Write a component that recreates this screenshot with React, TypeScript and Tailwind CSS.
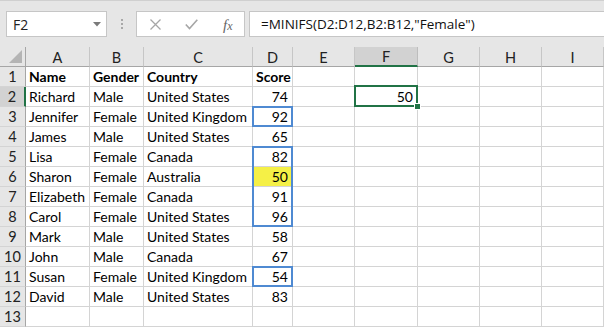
import React from "react";

const cols = ["A", "B", "C", "D", "E", "F", "G", "H", "I"];

type Row = [string, string, string, string];
const data: Row[] = [
  ["Name", "Gender", "Country", "Score"],
  ["Richard", "Male", "United States", "74"],
  ["Jennifer", "Female", "United Kingdom", "92"],
  ["James", "Male", "United States", "65"],
  ["Lisa", "Female", "Canada", "82"],
  ["Sharon", "Female", "Australia", "50"],
  ["Elizabeth", "Female", "Canada", "91"],
  ["Carol", "Female", "United States", "96"],
  ["Mark", "Male", "United States", "58"],
  ["John", "Male", "Canada", "67"],
  ["Susan", "Female", "United Kingdom", "54"],
  ["David", "Male", "United States", "83"],
  ["", "", "", ""],
];

const cellFont = { fontFamily: "Lato, 'Liberation Sans', sans-serif" };

export default function App() {
  return (
    <div className="w-[604px] h-[327px] overflow-hidden bg-white relative" style={cellFont}>
      {/* Toolbar */}
      <div className="h-[47px] bg-[#e6e6e6] border-t border-[#d0d0d0] flex items-start pt-[10px]">
        <div className="ml-[6px] w-[101px] h-[26px] bg-white border border-[#c6c6c6] flex items-center justify-between pl-[6px] pr-[5px]">
          <span className="text-[14px] text-[#222]" style={{ fontFamily: "'Open Sans', sans-serif" }}>F2</span>
          <svg width="8" height="5" viewBox="0 0 8 5"><path d="M0 0 L8 0 L4 4.5 Z" fill="#7a7a7a" /></svg>
        </div>
        <div className="ml-[14px] mt-[8px] flex flex-col gap-[2px]">
          <div className="w-[2px] h-[2px] bg-[#a8a8a8]" />
          <div className="w-[2px] h-[2px] bg-[#a8a8a8]" />
          <div className="w-[2px] h-[2px] bg-[#a8a8a8]" />
        </div>
        <div className="ml-[13px] w-[109px] h-[26px] bg-white border border-[#c6c6c6] relative">
          <svg className="absolute left-[13px] top-[7px]" width="11" height="11" viewBox="0 0 11 11">
            <path d="M0.5 0.5 L10.5 10.5 M10.5 0.5 L0.5 10.5" stroke="#a6a6a6" strokeWidth="1.3" />
          </svg>
          <svg className="absolute left-[48px] top-[7px]" width="13" height="11" viewBox="0 0 13 11">
            <path d="M0.8 5.5 L4.5 9.5 L12.3 0.8" stroke="#a6a6a6" strokeWidth="1.6" fill="none" />
          </svg>
          <span className="absolute left-[86px] top-[2px] text-[15px] italic text-[#666]" style={{ fontFamily: "'Liberation Serif', serif" }}>
            f<span className="text-[12px]">x</span>
          </span>
        </div>
        <div className="ml-[4px] flex-1 h-[26px] bg-white border border-[#c6c6c6] border-r-0 flex items-center pl-[11px]">
          <span className="text-[13.5px] text-[#111]" style={{ fontFamily: "'Open Sans', sans-serif" }}>
            =MINIFS(D2:D12,B2:B12,"Female")
          </span>
        </div>
      </div>

      {/* Grid */}
      <div className="grid grid-cols-[26px_64px_54px_109px_40px_62px_63px_62px_62px_62px] auto-rows-[20px]">
        {/* header row */}
        <div className="bg-[#e6e6e6] border-b border-r border-[#a6a6a6] relative">
          <svg className="absolute right-[3px] bottom-[3px]" width="13" height="13" viewBox="0 0 13 13">
            <path d="M13 0 L13 13 L0 13 Z" fill="#b4b4b4" />
          </svg>
        </div>
        {cols.map((c) => (
          <div
            key={c}
            className={
              c === "F"
                ? "bg-[#d2d2d2] border-b-2 border-b-[#217346] border-r border-r-[#bdbdbd] flex items-center justify-center text-[14.5px] text-[#222] pt-[2px]"
                : "bg-[#e6e6e6] border-b border-b-[#a6a6a6] border-r border-r-[#c6c6c6] flex items-center justify-center text-[14.5px] text-[#222] pt-[2px]"
            }
          >
            {c}
          </div>
        ))}

        {data.map((row, ri) => {
          const r = ri + 1;
          return (
            <React.Fragment key={r}>
              <div
                className={
                  r === 2
                    ? "bg-[#d2d2d2] border-b border-b-[#d4d4d4] border-r-2 border-r-[#217346] flex items-center justify-center text-[14.5px] text-[#222]"
                    : "bg-[#e6e6e6] border-b border-b-[#d4d4d4] border-r border-r-[#a6a6a6] flex items-center justify-center text-[14.5px] text-[#222]"
                }
              >
                {r}
              </div>
              {[0, 1, 2].map((ci) => (
                <div
                  key={ci}
                  className={
                    "border-b border-r border-[#d4d4d4] flex items-end pl-[3px] text-[14px] leading-[19px] text-black whitespace-nowrap overflow-visible" +
                    (r === 1 ? " font-bold" : "")
                  }
                >
                  {row[ci]}
                </div>
              ))}
              <div
                className={
                  "relative border-b border-r border-[#d4d4d4] flex items-end text-[14px] leading-[19px] text-black whitespace-nowrap " +
                  (r === 1 ? "font-bold justify-start pl-[3px]" : "justify-end pr-[4px]") +
                  (r === 6 ? " bg-[#f5f046]" : "")
                }
              >
                {row[3]}
                {(r === 3 || r === 11) && (
                  <div className="absolute -top-px -left-px w-[41px] h-[21px] border-2 border-[#4f8ad2] z-10" />
                )}
                {r === 5 && (
                  <div className="absolute -top-px -left-px w-[41px] h-[81px] border-2 border-[#4f8ad2] z-10" />
                )}
              </div>
              <div className="border-b border-r border-[#d4d4d4]" />
              <div className="relative border-b border-r border-[#d4d4d4] flex items-end justify-end pr-[4px] text-[14px] leading-[19px] text-black">
                {r === 2 ? "50" : ""}
                {r === 2 && (
                  <>
                    <div className="absolute top-[-2px] left-[-1px] w-[64px] h-[22px] border-2 border-[#217346] z-10" />
                    <div className="absolute right-[-4px] bottom-[-4px] w-[7px] h-[7px] bg-[#217346] border border-white z-20" />
                  </>
                )}
              </div>
              <div className="border-b border-r border-[#d4d4d4]" />
              <div className="border-b border-r border-[#d4d4d4]" />
              <div className="border-b border-r border-[#d4d4d4]" />
            </React.Fragment>
          );
        })}
      </div>
    </div>
  );
}
